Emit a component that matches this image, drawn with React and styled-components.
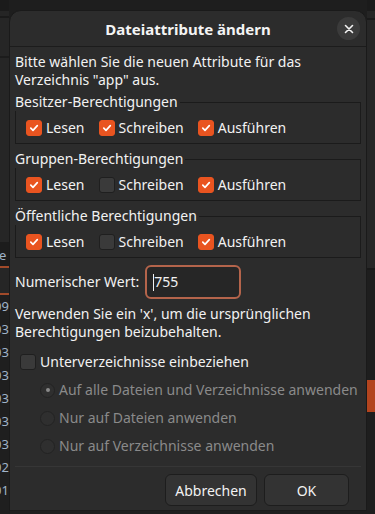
import React from "react";
import styled, { createGlobalStyle } from "styled-components";

const GlobalStyle = createGlobalStyle`
  html, body { margin: 0; padding: 0; background: #1e1e1e; }
  body { font-family: "Noto Sans", "DejaVu Sans", sans-serif; color: #f2f2f2; }
  * { box-sizing: border-box; }
`;

const Screen = styled.div`
  position: relative;
  width: 375px;
  height: 514px;
  overflow: hidden;
  background: #1e1e1e;
  display: grid;
  grid-template-columns: 9px 1fr 8px;
`;

const SidePane = styled.div`
  display: flex;
  flex-direction: column;
  background: #1f1f1f;
`;

const Strip = styled.div`
  height: ${({ h }) => h}px;
  flex: ${({ grow }) => (grow ? 1 : "none")};
  background: ${({ bg }) => bg || "transparent"};
  border-bottom: ${({ line }) => (line ? `2px solid ${line}` : "none")};
  color: #9fb3c8;
  font-size: 13px;
  line-height: ${({ h }) => h}px;
  overflow: hidden;
  white-space: nowrap;
  text-indent: ${({ indent }) => indent || 0}px;
`;

const Dialog = styled.div`
  position: absolute;
  left: 9px;
  top: 10px;
  width: 358px;
  height: 501px;
  background: #2c2c2c;
  border: 1px solid #1a1a1a;
  border-radius: 12px 12px 0 0;
  display: flex;
  flex-direction: column;
`;

const Header = styled.div`
  position: relative;
  height: 36px;
  flex: none;
  display: flex;
  align-items: center;
  justify-content: center;
  border-bottom: 1px solid #1c1c1c;
`;

const Title = styled.div`
  font-weight: 700;
  font-size: 15px;
  color: #f4f4f4;
`;

const CloseButton = styled.button`
  position: absolute;
  right: 6px;
  top: 6px;
  width: 23px;
  height: 23px;
  border-radius: 50%;
  border: none;
  background: #3b3b3b;
  display: flex;
  align-items: center;
  justify-content: center;
  padding: 0;
`;

const Body = styled.div`
  flex: 1;
  display: flex;
  flex-direction: column;
  padding: 6px 5px 0 5px;
  font-size: 14px;
  line-height: 18px;
`;

const Text = styled.p`
  margin: ${({ m }) => m || 0};
`;

const Frame = styled.fieldset`
  margin: ${({ first }) => (first ? "4px" : "6px")} 0 0 0;
  padding: 8px 10px 6px 10px;
  border: 1px solid #1b1b1b;
  min-width: 0;
`;

const Legend = styled.legend`
  padding: 0 2px 0 0;
  margin-left: -11px;
  font-size: 14px;
  line-height: 18px;
`;

const Row = styled.div`
  display: flex;
  align-items: center;
  gap: ${({ gap }) => gap || 14}px;
  padding-left: ${({ indent }) => indent || 0}px;
  margin-top: ${({ mt }) => mt || 0}px;
`;

const Option = styled.label`
  display: flex;
  align-items: center;
  gap: 4px;
  height: 18px;
  white-space: nowrap;
  color: ${({ disabled }) => (disabled ? "#8a8a8a" : "#f2f2f2")};
`;

const Box = styled.span`
  width: 16px;
  height: 16px;
  border-radius: 3px;
  flex: none;
  display: flex;
  align-items: center;
  justify-content: center;
  background: ${({ checked }) => (checked ? "#e95420" : "#3a3a3a")};
  border: 1px solid ${({ checked }) => (checked ? "#e95420" : "#1f1f1f")};
`;

const Radio = styled.span`
  width: 15px;
  height: 15px;
  border-radius: 50%;
  flex: none;
  display: flex;
  align-items: center;
  justify-content: center;
  background: #2f2f2f;
  border: 1px solid #232323;
  &::after {
    content: "";
    width: 4px;
    height: 4px;
    border-radius: 50%;
    background: ${({ checked }) => (checked ? "#8a8a8a" : "transparent")};
  }
`;

const NumberRow = styled.div`
  display: flex;
  align-items: center;
  gap: 6px;
  margin-top: 7px;
`;

const NumberInput = styled.div`
  width: 96px;
  height: 34px;
  border: 2px solid #b4644b;
  border-radius: 6px;
  background: #262626;
  display: flex;
  align-items: center;
  padding-left: 6px;
  font-size: 14px;
`;

const Caret = styled.span`
  width: 1px;
  height: 17px;
  background: #f2f2f2;
`;

const RadioList = styled.div`
  display: flex;
  flex-direction: column;
  gap: 10px;
  margin-top: 10px;
`;

const Separator = styled.div`
  height: 1px;
  background: #363636;
  margin: 11px 0 0 0;
`;

const Footer = styled.div`
  display: flex;
  justify-content: flex-end;
  gap: 7px;
  padding: 7px 12px 0 0;
`;

const Button = styled.button`
  width: ${({ w }) => w}px;
  height: 32px;
  border-radius: 6px;
  border: 1px solid #1d1d1d;
  background: #333333;
  color: #f2f2f2;
  font-family: inherit;
  font-size: 14px;
  padding: 0;
`;

const Check = () => (
  <svg width="10" height="10" viewBox="0 0 10 10">
    <path d="M1.8 5.2 L4 7.3 L8.3 2.7" fill="none" stroke="#fff" strokeWidth="1.7" strokeLinecap="round" strokeLinejoin="round" />
  </svg>
);

const CheckBox = ({ checked, children, disabled }) => (
  <Option disabled={disabled}>
    <Box checked={checked}>{checked && <Check />}</Box>
    {children}
  </Option>
);

const permissions = [
  { title: "Besitzer-Berechtigungen", values: [true, true, true] },
  { title: "Gruppen-Berechtigungen", values: [true, false, true] },
  { title: "Öffentliche Berechtigungen", values: [true, false, true] },
];

const labels = ["Lesen", "Schreiben", "Ausführen"];

const radios = [
  { text: "Auf alle Dateien und Verzeichnisse anwenden", checked: true },
  { text: "Nur auf Dateien anwenden", checked: false },
  { text: "Nur auf Verzeichnisse anwenden", checked: false },
];

const leftNumbers = ["09", "03", "03", "03", "03", "03", "03", "02", "01"];

export default function App() {
  return (
    <>
      <GlobalStyle />
      <Screen>
        <SidePane>
          <Strip h={11} bg="#1b1b1b" />
          <Strip h={7} bg="#252525" line="#1a1a1a" />
          <Strip h={40} bg="#262626" line="#1c1c1c" />
          <Strip h={184} bg="#262626" />
          <Strip h={26} bg="#1c1c1c" line="#a14a2a" indent={-1}>e</Strip>
          <Strip h={27} bg="#262626" line="#a14a2a" />
          {leftNumbers.map((n, i) => (
            <Strip key={i} h={23} bg="#1f1f1f" indent={-6}>{n}</Strip>
          ))}
          <Strip grow bg="#1f1f1f" />
        </SidePane>
        <div />
        <SidePane>
          <Strip h={11} bg="#1b1b1b" />
          <Strip h={9} bg="#252525" line="#1a1a1a" />
          <Strip h={250} bg="#272727" line="#191919" />
          <Strip h={110} bg="#1e1e1e" />
          <Strip h={32} bg="#b3441e" />
          <Strip grow bg="#1e1e1e" />
        </SidePane>

        <Dialog>
          <Header>
            <Title>Dateiattribute ändern</Title>
            <CloseButton aria-label="Schließen">
              <svg width="10" height="10" viewBox="0 0 10 10">
                <path d="M1.5 1.5 L8.5 8.5 M8.5 1.5 L1.5 8.5" stroke="#f2f2f2" strokeWidth="1.6" strokeLinecap="round" />
              </svg>
            </CloseButton>
          </Header>
          <Body>
            <Text>
              Bitte wählen Sie die neuen Attribute für das
              <br />
              Verzeichnis "app" aus.
            </Text>
            {permissions.map((group, gi) => (
              <Frame key={group.title} first={gi === 0}>
                <Legend>{group.title}</Legend>
                <Row>
                  {labels.map((label, li) => (
                    <CheckBox key={label} checked={group.values[li]}>
                      {label}
                    </CheckBox>
                  ))}
                </Row>
              </Frame>
            ))}
            <NumberRow>
              <span>Numerischer Wert:</span>
              <NumberInput>
                <Caret />
                755
              </NumberInput>
            </NumberRow>
            <Text m="6px 0 0 0">
              Verwenden Sie ein 'x', um die ursprünglichen
              <br />
              Berechtigungen beizubehalten.
            </Text>
            <Row indent={5} mt={12}>
              <CheckBox checked={false}>Unterverzeichnisse einbeziehen</CheckBox>
            </Row>
            <RadioList>
              {radios.map((r) => (
                <Row key={r.text} indent={25}>
                  <Option disabled>
                    <Radio checked={r.checked} />
                    {r.text}
                  </Option>
                </Row>
              ))}
            </RadioList>
            <Separator />
            <Footer>
              <Button w={92}>Abbrechen</Button>
              <Button w={85}>OK</Button>
            </Footer>
          </Body>
        </Dialog>
      </Screen>
    </>
  );
}
